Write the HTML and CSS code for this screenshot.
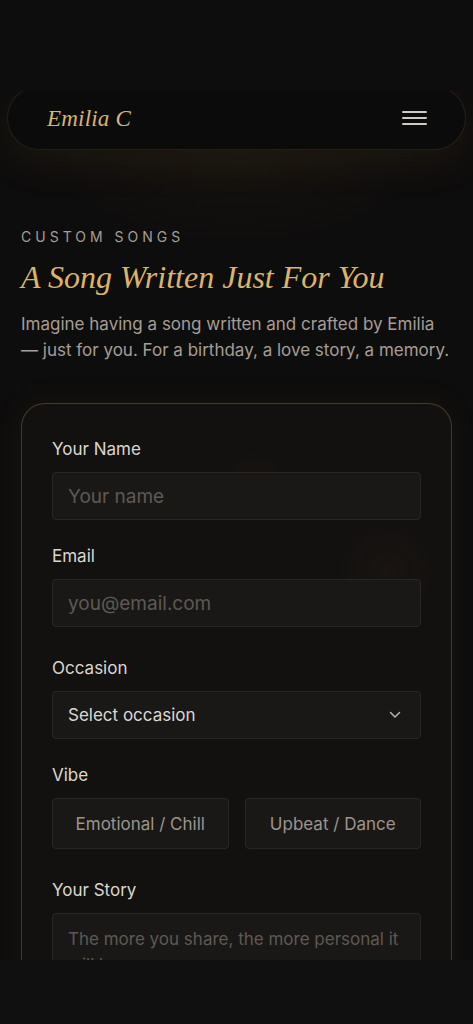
FILE: index.html
```html
<!DOCTYPE html>
<html lang="en">
<head>
<meta charset="utf-8">
<meta name="viewport" content="width=device-width, initial-scale=1">
<title>Emilia C — Custom Songs</title>
<link rel="stylesheet" href="styles.css">
</head>
<body>
<div class="viewport">
  <header class="site-header">
    <a class="logo" href="#">Emilia C</a>
    <button class="menu" aria-label="Menu">
      <span></span><span></span><span></span>
    </button>
  </header>

  <main class="content">
    <p class="eyebrow">CUSTOM SONGS</p>
    <h1 class="title">A Song Written Just For You</h1>
    <p class="intro">Imagine having a song written and crafted by Emilia — just for you. For a birthday, a love story, a memory.</p>

    <form class="card">
      <div class="field">
        <label class="label">Your Name</label>
        <div class="input placeholder">Your name</div>
      </div>
      <div class="field">
        <label class="label">Email</label>
        <div class="input placeholder">you@email.com</div>
      </div>
      <div class="field field-wide">
        <label class="label">Occasion</label>
        <div class="input select">
          <span>Select occasion</span>
          <svg class="chev" width="12" height="8" viewBox="0 0 12 8"><path d="M1.5 1.5 L6 6 L10.5 1.5" fill="none" stroke="#b8b2ac" stroke-width="1.5" stroke-linecap="round" stroke-linejoin="round"/></svg>
        </div>
      </div>
      <div class="field">
        <label class="label">Vibe</label>
        <div class="vibes">
          <div class="vibe">Emotional / Chill</div>
          <div class="vibe">Upbeat / Dance</div>
        </div>
      </div>
      <div class="field field-wide">
        <label class="label">Your Story</label>
        <div class="input textarea placeholder">The more you share, the more personal it will be...</div>
      </div>
    </form>
  </main>
</div>
<div class="bottom-bar"></div>
</body>
</html>
```

FILE: styles.css
```css
* { box-sizing: border-box; }

html, body {
  margin: 0;
  padding: 0;
  background: #0e0d0d;
  font-family: "Inter", "Noto Sans", sans-serif;
}

.viewport {
  margin-top: 91px;
  height: 869px;
  overflow: hidden;
  background:
    radial-gradient(ellipse 260px 120px at 50% 8%, rgba(120, 90, 40, 0.07), transparent 70%),
    #0e0d0d;
}

.site-header {
  margin: -5px 7px 0;
  height: 64px;
  border-radius: 32px;
  background: #0c0b0b;
  border: 1px solid rgba(150, 120, 70, 0.18);
  box-shadow: 0 12px 40px rgba(150, 110, 40, 0.10);
  display: flex;
  align-items: center;
  justify-content: space-between;
  padding: 0 38px 0 39px;
}

.logo {
  font-family: "Liberation Serif", "DejaVu Serif", serif;
  font-style: italic;
  font-size: 23px;
  color: #d9b56c;
  text-decoration: none;
  letter-spacing: 0.2px;
  margin-top: 2px;
}

.menu {
  background: none;
  border: 0;
  padding: 0;
  width: 25px;
  display: flex;
  flex-direction: column;
  gap: 4px;
}
.menu span {
  display: block;
  height: 2px;
  background: #cfcac5;
  border-radius: 1px;
}

.content {
  padding: 0 21px;
}

.eyebrow {
  margin: 77px 0 0;
  font-size: 14px;
  line-height: 20px;
  letter-spacing: 4px;
  color: #a59e97;
}

.title {
  margin: 10px 0 0;
  font-family: "Liberation Serif", "DejaVu Serif", serif;
  font-style: italic;
  font-weight: 400;
  font-size: 32px;
  line-height: 40px;
  color: #dcb466;
}

.intro {
  margin: 14px 0 0;
  font-size: 17px;
  line-height: 26px;
  color: #a69d96;
}

.card {
  margin-top: 40px;
  border: 1px solid rgba(170, 130, 70, 0.35);
  border-radius: 24px;
  padding: 34px 30px 40px;
  background:
    radial-gradient(circle 40px at 54% 12%, rgba(120, 70, 30, 0.06), transparent 80%),
    radial-gradient(circle 60px at 85% 25%, rgba(120, 70, 30, 0.06), transparent 80%),
    #131110;
  box-shadow: 0 0 30px rgba(120, 85, 40, 0.10);
}

.field { margin-top: 25px; }
.field:first-child { margin-top: 0; }
.field-wide { margin-top: 30px; }

.label {
  display: block;
  font-size: 17px;
  line-height: 22px;
  font-weight: 400;
  color: #dcd6d0;
  margin-bottom: 12px;
}

.input {
  height: 48px;
  background: #1a1817;
  border: 1px solid #2a2624;
  border-radius: 4px;
  padding: 0 15px;
  display: flex;
  align-items: center;
  font-size: 19px;
  color: #d9d3cd;
}

.placeholder { color: #5f5852; }

.select {
  justify-content: space-between;
  font-size: 17px;
  color: #ddd7d1;
  padding-right: 19px;
}

.vibes {
  display: grid;
  grid-template-columns: 1fr 1fr;
  gap: 16px;
}
.vibe {
  height: 51px;
  background: #1a1817;
  border: 1px solid #2a2624;
  border-radius: 4px;
  display: flex;
  align-items: center;
  justify-content: center;
  font-size: 17px;
  color: #9c948d;
}

.textarea {
  height: 120px;
  align-items: flex-start;
  padding-top: 12px;
  line-height: 26px;
  font-size: 17px;
}

.bottom-bar {
  height: 64px;
  background: #111010;
}
```
